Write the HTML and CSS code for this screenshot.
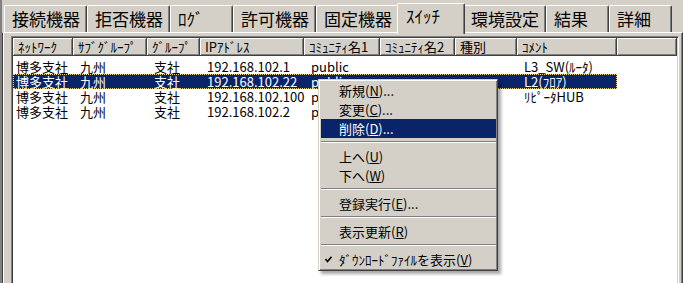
FILE: index.html
```html
<!DOCTYPE html>
<html lang="ja">
<head>
<meta charset="utf-8">
<title>スイッチ</title>
<link rel="stylesheet" href="styles.css">
</head>
<body>
<div class="window">
  <div class="tabs">
    <div class="tab">接続機器</div>
    <div class="tab">拒否機器</div>
    <div class="tab">ﾛｸﾞ</div>
    <div class="tab">許可機器</div>
    <div class="tab">固定機器</div>
    <div class="tab active">ｽｲｯﾁ</div>
    <div class="tab">環境設定</div>
    <div class="tab">結果</div>
    <div class="tab">詳細</div>
  </div>
  <div class="panel">
    <div class="listview">
      <div class="header">
        <div class="hcell">ﾈｯﾄﾜｰｸ</div>
        <div class="hcell">ｻﾌﾞｸﾞﾙｰﾌﾟ</div>
        <div class="hcell">ｸﾞﾙｰﾌﾟ</div>
        <div class="hcell">IPｱﾄﾞﾚｽ</div>
        <div class="hcell">ｺﾐｭﾆﾃｨ名1</div>
        <div class="hcell">ｺﾐｭﾆﾃｨ名2</div>
        <div class="hcell">種別</div>
        <div class="hcell">ｺﾒﾝﾄ</div>
        <div class="hcell"></div>
      </div>
      <div class="rows">
        <div class="row">
          <div class="cell">博多支社</div><div class="cell">九州</div><div class="cell">支社</div><div class="cell">192.168.102.1</div><div class="cell">public</div><div class="cell"></div><div class="cell"></div><div class="cell">L3_SW(ﾙｰﾀ)</div>
        </div>
        <div class="row selected">
          <div class="cell">博多支社</div><div class="cell">九州</div><div class="cell">支社</div><div class="cell">192.168.102.22</div><div class="cell">public</div><div class="cell"></div><div class="cell"></div><div class="cell">L2(ﾌﾛｱ)</div>
        </div>
        <div class="row">
          <div class="cell">博多支社</div><div class="cell">九州</div><div class="cell">支社</div><div class="cell">192.168.102.100</div><div class="cell">public</div><div class="cell"></div><div class="cell"></div><div class="cell">ﾘﾋﾟｰﾀHUB</div>
        </div>
        <div class="row">
          <div class="cell">博多支社</div><div class="cell">九州</div><div class="cell">支社</div><div class="cell">192.168.102.2</div><div class="cell">public</div><div class="cell"></div><div class="cell"></div><div class="cell"></div>
        </div>
      </div>
    </div>
  </div>
  <div class="menu">
    <div class="mi">新規(<u>N</u>)...</div>
    <div class="mi">変更(<u>C</u>)...</div>
    <div class="mi hl">削除(<u>D</u>)...</div>
    <div class="sep"></div>
    <div class="mi">上へ(<u>U</u>)</div>
    <div class="mi">下へ(<u>W</u>)</div>
    <div class="sep"></div>
    <div class="mi">登録実行(<u>E</u>)...</div>
    <div class="sep"></div>
    <div class="mi">表示更新(<u>R</u>)</div>
    <div class="sep"></div>
    <div class="mi"><svg class="check" width="7" height="7" viewBox="0 0 7 7"><polyline points="0.5,3 2.5,5.5 6.5,0.8" fill="none" stroke="#000" stroke-width="1.6"/></svg>ﾀﾞｳﾝﾛｰﾄﾞﾌｧｲﾙを表示(<u>V</u>)</div>
  </div>
</div>
</body>
</html>
```

FILE: styles.css
```css
html, body {
  margin: 0;
  padding: 0;
}
body {
  width: 683px;
  height: 283px;
  overflow: hidden;
  background: #d4d0c8;
  font-family: "Noto Sans CJK JP", sans-serif;
  color: #000;
}
.window {
  position: relative;
  height: 283px;
  box-sizing: border-box;
  border-left: 2px solid #808080;
}
.tabs {
  display: flex;
  align-items: flex-end;
  height: 32px;
  box-sizing: border-box;
  padding: 0 0 0 2px;
}
.tab {
  height: 27px;
  box-sizing: border-box;
  min-width: 63px;
  padding: 0 6px 0 7px;
  font-size: 17px;
  line-height: 25px;
  white-space: nowrap;
  border-top: 1px solid #fff;
  border-left: 1px solid #fff;
  border-right: 1px solid #404040;
  box-shadow: inset -1px 0 #808080;
  border-radius: 2px 2px 0 0;
}
.tab.active {
  position: relative;
  z-index: 1;
  height: 31px;
  min-width: 68px;
  margin: 0 -2px -2px;
  padding: 0 8px 0 8px;
  line-height: 24px;
  background: #d4d0c8;
}
.panel {
  height: 251px;
  box-sizing: border-box;
  overflow: hidden;
  border-top: 1px solid #fff;
  border-left: 1px solid #404040;
  border-right: 1px solid #404040;
  box-shadow: inset 1px 0 #fff, inset -1px 0 #808080;
  padding: 3px 3px 0 8px;
}
.listview {
  width: 668px;
  height: 252px;
  box-sizing: border-box;
  background: #fff;
  border: 1px solid;
  border-color: #808080 #fff #fff #808080;
  box-shadow: inset 1px 1px #404040, inset -1px -1px #d4d0c8;
  padding: 1px;
}
.header {
  display: grid;
  grid-template-columns: 60px 74px 53px 104px 76px 75px 62px 100px 60px;
  height: 18px;
}
.hcell {
  box-sizing: border-box;
  background: #d4d0c8;
  border-right: 1px solid #404040;
  border-bottom: 1px solid #404040;
  box-shadow: inset 1px 1px #fff, inset -1px -1px #808080;
  padding-left: 5px;
  font-size: 13px;
  line-height: 17px;
  white-space: nowrap;
}
.rows {
  padding-top: 3px;
}
.row {
  display: grid;
  grid-template-columns: 60px 74px 53px 104px 76px 75px 62px 100px;
  width: 604px;
  height: 15px;
  font-size: 13px;
  line-height: 15px;
}
.cell {
  padding-left: 7px;
  white-space: nowrap;
}
.cell:first-child {
  padding-left: 3px;
}
.row.selected {
  background: #0a246a;
  color: #fff;
  outline: 1px dotted #e8d48a;
  outline-offset: -1px;
}
.menu {
  position: absolute;
  left: 316px;
  top: 79px;
  width: 180px;
  height: 192px;
  box-sizing: border-box;
  background: #d4d0c8;
  border: 1px solid;
  border-color: #d4d0c8 #404040 #404040 #d4d0c8;
  box-shadow: inset 1px 1px #fff, inset -1px -1px #808080, 3px 3px 3px rgba(0, 0, 0, 0.35);
  padding: 1px 1px 1px 2px;
}
.mi {
  position: relative;
  height: 19px;
  line-height: 19px;
  padding-left: 18px;
  font-size: 13px;
  white-space: nowrap;
}
.mi.hl {
  background: #0a246a;
  color: #fff;
}
.check {
  position: absolute;
  left: 4px;
  top: 6px;
}
.sep {
  height: 9px;
  box-sizing: border-box;
  padding-top: 3px;
}
.sep::before {
  content: "";
  display: block;
  border-top: 1px solid #808080;
  border-bottom: 1px solid #fff;
}
```
